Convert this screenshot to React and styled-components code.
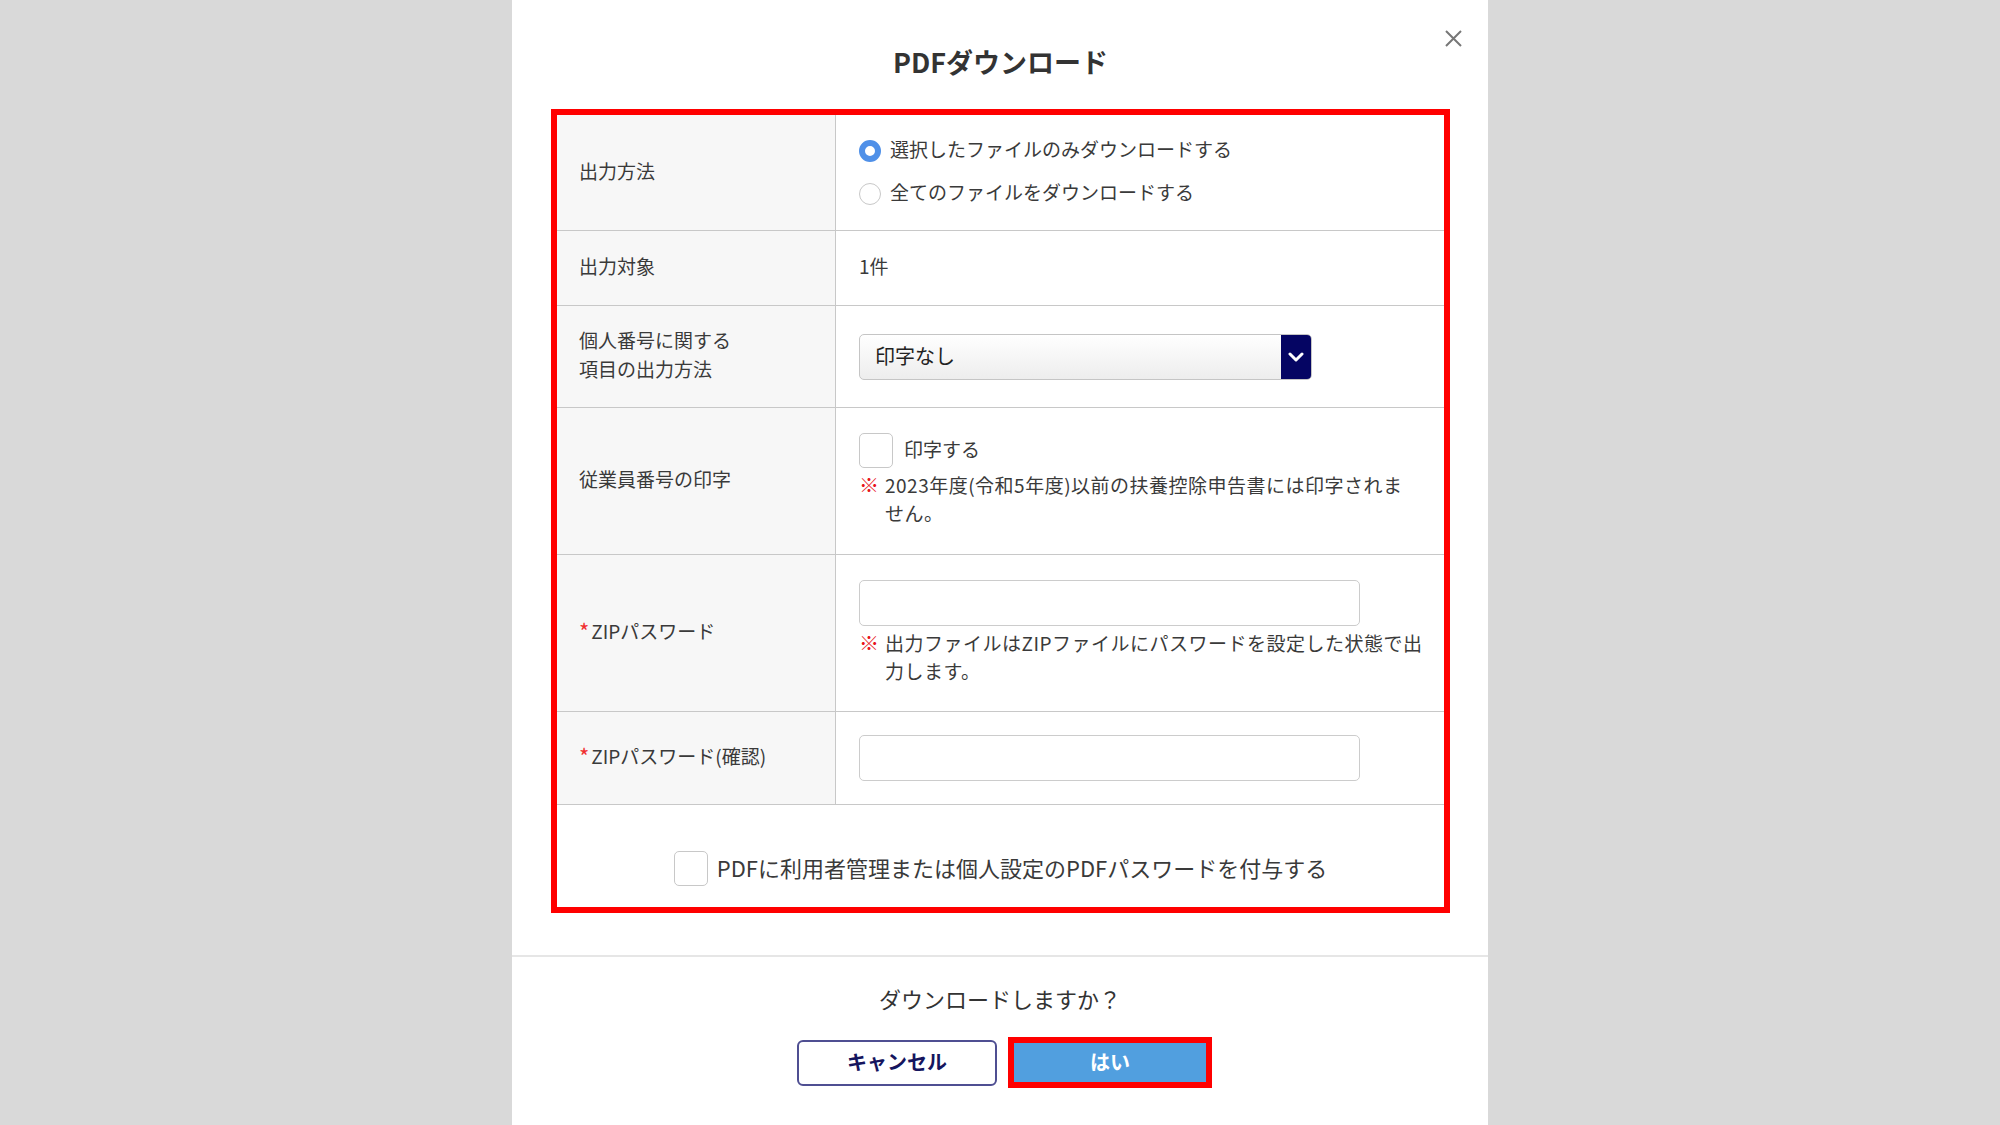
import React from 'react';
import styled, {createGlobalStyle} from 'styled-components';

const GlobalStyle = createGlobalStyle`
  body {
    margin: 0;
    background: #d9d9d9;
    font-family: "Noto Sans CJK JP", "Noto Sans", sans-serif;
    color: #333;
  }
`;

const Modal = styled.div`
  position: relative;
  width: 976px;
  min-height: 1125px;
  margin: 0 auto;
  background: #fff;
  box-sizing: border-box;
`;

const CloseButton = styled.button`
  position: absolute;
  top: 29px;
  right: 25px;
  width: 19px;
  height: 19px;
  padding: 0;
  border: 0;
  background: none;
  cursor: pointer;
`;

const Body = styled.div`
  padding: 44px 38px 0 39px;
`;

const Title = styled.h2`
  margin: 0 0 29px;
  font-size: 27px;
  line-height: 36px;
  font-weight: 700;
  text-align: center;
  color: #333;
`;

const Annotated = styled.div`
  border: 6px solid #ff0000;
`;

const Row = styled.div`
  display: grid;
  grid-template-columns: 279px 1fr;
  height: ${(p) => p.h}px;
  box-sizing: border-box;
  border-bottom: 1px solid #c8c8c8;
`;

const Label = styled.div`
  display: flex;
  align-items: center;
  padding: 0 0 5px 22px;
  background: #f7f7f7;
  border-right: 1px solid #c8c8c8;
  font-size: 19px;
  line-height: 29px;
  color: #3a3a3a;
`;

const Required = styled.span`
  position: relative;
  top: -1px;
  color: #f03030;
  font-size: 22px;
  margin-right: 2px;
  line-height: 20px;
`;

const LabelText = styled.span`
  display: inline-flex;
  align-items: center;
`;

const Value = styled.div`
  display: flex;
  flex-direction: column;
  justify-content: center;
  align-items: flex-start;
  padding: 0 0 ${(p) => (p.lift ? 5 : 0)}px 23px;
  font-size: 19px;
  color: #3a3a3a;
`;

const RadioLine = styled.label`
  display: flex;
  align-items: center;
  gap: 9px;
  height: 43px;
  font-size: 19px;
`;

const RadioDot = styled.span`
  width: 22px;
  height: 22px;
  border-radius: 50%;
  box-sizing: border-box;
  background: #fff;
  border: ${(p) => (p.checked ? '6px solid #4f90e8' : '1.5px solid #c8c8c8')};
  position: relative;
  top: 2px;
`;

const Select = styled.div`
  display: flex;
  width: 453px;
  height: 46px;
  box-sizing: border-box;
  border: 1px solid #c5c5c5;
  border-radius: 5px;
  overflow: hidden;
  background: linear-gradient(#ffffff, #ededed);
`;

const SelectText = styled.span`
  flex: 1;
  display: flex;
  align-items: center;
  padding: 0 0 3px 15px;
  font-size: 20px;
  color: #222;
`;

const SelectArrow = styled.span`
  width: 30px;
  display: flex;
  align-items: center;
  justify-content: center;
  background: #050563;
`;

const CheckLine = styled.label`
  display: flex;
  align-items: center;
  gap: ${(p) => p.gap}px;
  font-size: ${(p) => p.size}px;
  color: #3a3a3a;

  & > span:last-child {
    position: relative;
    top: -2px;
  }
`;

const CheckBox = styled.span`
  width: 34px;
  height: 35px;
  box-sizing: border-box;
  border: 1.5px solid #c8c8c8;
  border-radius: 5px;
  background: #fff;
  flex: none;
`;

const Note = styled.div`
  display: grid;
  grid-template-columns: 26px auto;
  align-items: start;
  margin-top: 5px;
  font-size: 19px;
  line-height: 28px;
  letter-spacing: 0.5px;
  color: #3a3a3a;
  white-space: nowrap;

  & > span {
    position: relative;
    top: -2px;
  }
`;

const Mark = styled.span`
  color: #e8141b;
  font-size: 20px;
  font-weight: 700;
  line-height: 28px;
`;

const TextInput = styled.input`
  width: 501px;
  height: 46px;
  box-sizing: border-box;
  border: 1.5px solid #cccccc;
  border-radius: 5px;
  background: #fff;
  outline: none;
`;

const PdfOption = styled.div`
  display: flex;
  justify-content: center;
  padding: 46px 0 21px;
`;

const Footer = styled.div`
  margin-top: 42px;
  border-top: 2px solid #e6e6e6;
  padding-top: 26px;
  display: flex;
  flex-direction: column;
  align-items: center;
`;

const Question = styled.p`
  margin: 0;
  font-size: 22px;
  line-height: 30px;
  color: #333;
`;

const Buttons = styled.div`
  display: flex;
  align-items: center;
  gap: 11px;
  margin-top: 24px;
  padding-left: 9px;
`;

const CancelButton = styled.button`
  width: 200px;
  height: 46px;
  box-sizing: border-box;
  border: 2px solid #4f4f92;
  border-radius: 6px;
  background: #fff;
  color: #15155e;
  font-family: inherit;
  font-size: 20px;
  font-weight: 700;
  padding-bottom: 3px;
`;

const Highlight = styled.div`
  border: 6px solid #ff0000;
`;

const OkButton = styled.button`
  display: block;
  width: 192px;
  height: 39px;
  border: 0;
  background: #519fdf;
  color: #fff;
  font-family: inherit;
  font-size: 20px;
  font-weight: 700;
  padding-bottom: 3px;
`;

const App = () => {
    return (
        <>
            <GlobalStyle/>
            <Modal>
                <CloseButton aria-label="閉じる">
                    <svg width="19" height="19" viewBox="0 0 19 19">
                        <path d="M2 2 L17 17 M17 2 L2 17" stroke="#777" strokeWidth="2" fill="none"/>
                    </svg>
                </CloseButton>
                <Body>
                    <Title>PDFダウンロード</Title>
                    <Annotated>
                        <Row h={116}>
                            <Label>出力方法</Label>
                            <Value lift>
                                <RadioLine><RadioDot checked/>選択したファイルのみダウンロードする</RadioLine>
                                <RadioLine><RadioDot/>全てのファイルをダウンロードする</RadioLine>
                            </Value>
                        </Row>
                        <Row h={75}>
                            <Label>出力対象</Label>
                            <Value lift>1件</Value>
                        </Row>
                        <Row h={102}>
                            <Label>個人番号に関する<br/>項目の出力方法</Label>
                            <Value>
                                <Select>
                                    <SelectText>印字なし</SelectText>
                                    <SelectArrow>
                                        <svg width="16" height="10" viewBox="0 0 16 10">
                                            <path d="M2 2 L8 8 L14 2" stroke="#fff" strokeWidth="3" fill="none"
                                                  strokeLinecap="round" strokeLinejoin="round"/>
                                        </svg>
                                    </SelectArrow>
                                </Select>
                            </Value>
                        </Row>
                        <Row h={147}>
                            <Label>従業員番号の印字</Label>
                            <Value>
                                <CheckLine gap={11} size={19}><CheckBox/><span>印字する</span></CheckLine>
                                <Note>
                                    <Mark>※</Mark>
                                    <span>2023年度(令和5年度)以前の扶養控除申告書には印字されま<br/>せん。</span>
                                </Note>
                            </Value>
                        </Row>
                        <Row h={157}>
                            <Label><LabelText><Required>*</Required>ZIPパスワード</LabelText></Label>
                            <Value>
                                <TextInput type="password"/>
                                <Note>
                                    <Mark>※</Mark>
                                    <span>出力ファイルはZIPファイルにパスワードを設定した状態で出<br/>力します。</span>
                                </Note>
                            </Value>
                        </Row>
                        <Row h={93}>
                            <Label><LabelText><Required>*</Required>ZIPパスワード(確認)</LabelText></Label>
                            <Value>
                                <TextInput type="password"/>
                            </Value>
                        </Row>
                        <PdfOption>
                            <CheckLine gap={9} size={22}>
                                <CheckBox/><span>PDFに利用者管理または個人設定のPDFパスワードを付与する</span>
                            </CheckLine>
                        </PdfOption>
                    </Annotated>
                </Body>
                <Footer>
                    <Question>ダウンロードしますか？</Question>
                    <Buttons>
                        <CancelButton>キャンセル</CancelButton>
                        <Highlight>
                            <OkButton>はい</OkButton>
                        </Highlight>
                    </Buttons>
                </Footer>
            </Modal>
        </>
    );
};

export default App;
